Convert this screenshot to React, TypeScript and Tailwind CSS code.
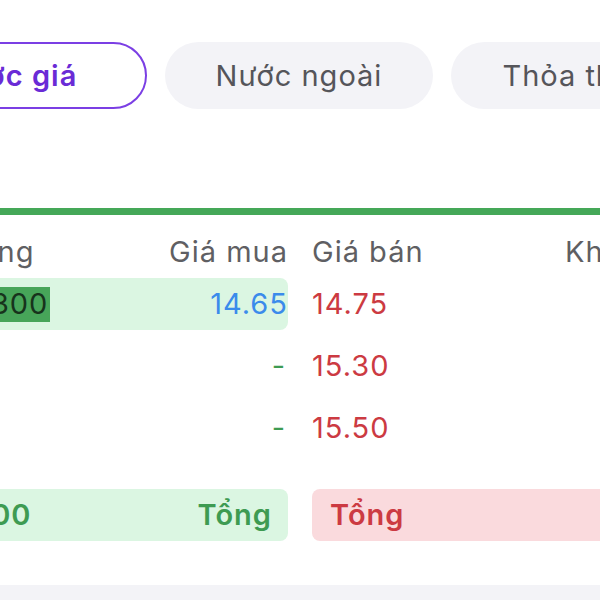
import React from "react";

const font = { fontFamily: "Inter, 'Noto Sans', sans-serif" };

export default function App() {
  return (
    <div
      className="w-[600px] h-[600px] overflow-hidden bg-white flex flex-col tracking-[1px]"
      style={font}
    >
      {/* Tabs */}
      <div className="mt-[42px] ml-[-121px] flex gap-[18px] shrink-0">
        <div className="w-[268px] h-[67px] shrink-0 rounded-full border-2 border-[#7b3fe4] flex items-center justify-center text-[29px] font-semibold text-[#6a2bd6]">
          Bước giá
        </div>
        <div className="w-[268px] h-[67px] shrink-0 rounded-full bg-[#f3f3f7] flex items-center justify-center text-[29px] text-[#55555a]">
          Nước ngoài
        </div>
        <div className="w-[268px] h-[67px] shrink-0 rounded-full bg-[#f3f3f7] flex items-center justify-center text-[29px] text-[#55555a]">
          Thỏa thuận
        </div>
      </div>

      {/* Green bar */}
      <div className="mt-[99px] h-[7px] w-full bg-[#45a858] shrink-0" />

      {/* Table */}
      <div className="ml-[-133px] flex gap-[24px] shrink-0">
        {/* Buy side */}
        <div className="w-[421px] shrink-0 flex flex-col text-[29px]">
          <div className="mt-[19px] h-[36px] flex items-center justify-between pl-[12px] text-[#5f5f63]">
            <span>Khối lượng</span>
            <span>Giá mua</span>
          </div>
          <div className="mt-[8px] h-[52px] rounded-lg bg-[#dbf6e2] flex items-center justify-between pl-[12px]">
            <span className="bg-[#47a559] text-[#17331c] h-[35px] flex items-center pr-[2px]">
              112,512,300
            </span>
            <span className="text-[#3b8beb]">14.65</span>
          </div>
          <div className="mt-[10px] h-[52px] flex items-center justify-end pr-[2px] text-[#3e9b52]">
            -
          </div>
          <div className="mt-[10px] h-[52px] flex items-center justify-end pr-[2px] text-[#3e9b52]">
            -
          </div>
          <div className="mt-[35px] h-[52px] rounded-lg bg-[#dbf6e2] flex items-center justify-between pl-[1px] pr-[16px] font-semibold text-[#3e9b52]">
            <span>12,512,200</span>
            <span>Tổng</span>
          </div>
        </div>

        {/* Sell side */}
        <div className="w-[420px] shrink-0 flex flex-col text-[29px]">
          <div className="mt-[19px] h-[36px] flex items-center text-[#5f5f63]">
            <span className="w-[253px]">Giá bán</span>
            <span>Khối lượng</span>
          </div>
          <div className="mt-[8px] h-[52px] flex items-center text-[#cc3a42]">
            14.75
          </div>
          <div className="mt-[10px] h-[52px] flex items-center text-[#cc3a42]">
            15.30
          </div>
          <div className="mt-[10px] h-[52px] flex items-center text-[#cc3a42]">
            15.50
          </div>
          <div className="mt-[35px] h-[52px] rounded-lg bg-[#fadadd] flex items-center pl-[18px] font-semibold text-[#cc3a42]">
            Tổng
          </div>
        </div>
      </div>

      {/* Bottom strip */}
      <div className="mt-[44px] h-[40px] w-full bg-[#f3f3f7] shrink-0" />
    </div>
  );
}
